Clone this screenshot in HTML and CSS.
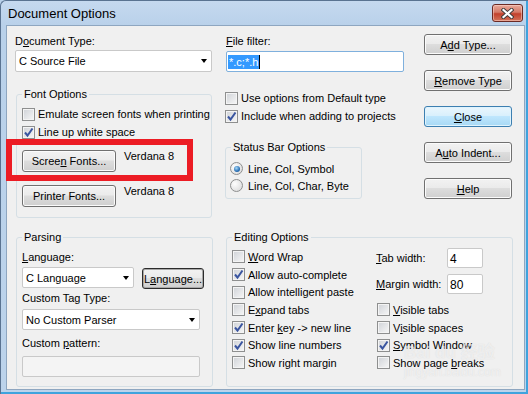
FILE: index.html
```html
<!DOCTYPE html>
<html lang="en">
<head>
    <meta charset="UTF-8">
    <title>Document Options</title>
    <link rel="stylesheet" href="styles.css">
</head>
<body>
    <div class="window">
        <div class="titlebar">
            <span class="title">Document Options</span>
            <button class="close-btn">
                <svg width="13" height="11" viewBox="0 0 13 11">
                    <path d="M2.5 2 L10.5 9 M10.5 2 L2.5 9" stroke="#3a3a3a" stroke-width="4" stroke-linecap="square"/>
                    <path d="M2.5 2 L10.5 9 M10.5 2 L2.5 9" stroke="#fff" stroke-width="2.2" stroke-linecap="square"/>
                </svg>
            </button>
        </div>
        <div class="client">
            <div class="top">
                <div class="col-left">
                    <div class="label">D<u>o</u>cument Type:</div>
                    <div class="select doc-type"><span>C Source File</span><i class="arrow"></i></div>
                    <fieldset class="group font-group">
                        <legend>Font Options</legend>
                        <div class="check first"><span class="box"></span><span>Emulate screen fonts when printing</span></div>
                        <div class="check"><span class="box on"><svg viewBox="0 0 11 11"><path d="M2 5.5 L4.5 8.5 L9.5 1.5"/></svg></span><span>Line up white space</span></div>
                        <div class="font-row first">
                            <button class="btn font-btn">Scree<u>n</u> Fonts...</button>
                            <span class="font-name">Verdana 8</span>
                        </div>
                        <div class="font-row">
                            <button class="btn font-btn">Printer Fonts...</button>
                            <span class="font-name">Verdana 8</span>
                        </div>
                    </fieldset>
                </div>
                <div class="col-mid">
                    <div class="label"><u>F</u>ile filter:</div>
                    <div class="textbox filter"><span class="sel">*.c;*.h</span><span class="caret"></span></div>
                    <div class="check first"><span class="box"></span><span>Use options from Default type</span></div>
                    <div class="check"><span class="box on"><svg viewBox="0 0 11 11"><path d="M2 5.5 L4.5 8.5 L9.5 1.5"/></svg></span><span>Include when adding to projects</span></div>
                    <fieldset class="group status-group">
                        <legend>Status Bar Options</legend>
                        <div class="radio-row first"><span class="radio on"></span><span>Line, Col, Symbol</span></div>
                        <div class="radio-row"><span class="radio"></span><span>Line, Col, Char, Byte</span></div>
                    </fieldset>
                </div>
                <div class="col-right">
                    <button class="btn">A<u>d</u>d Type...</button>
                    <button class="btn"><u>R</u>emove Type</button>
                    <button class="btn default"><u>C</u>lose</button>
                    <button class="btn">A<u>u</u>to Indent...</button>
                    <button class="btn"><u>H</u>elp</button>
                </div>
            </div>
            <div class="bottom">
                <fieldset class="group parse-group">
                    <legend>Parsing</legend>
                    <div class="label first"><u>L</u>anguage:</div>
                    <div class="lang-row">
                        <div class="select lang"><span>C Language</span><i class="arrow"></i></div>
                        <button class="btn focus lang-btn">L<u>a</u>nguage...</button>
                    </div>
                    <div class="label tag-label">Custom Tag Type:</div>
                    <div class="select parser"><span>No Custom Parser</span><i class="arrow"></i></div>
                    <div class="label pattern-label">Custom <u>p</u>attern:</div>
                    <div class="textbox disabled"></div>
                </fieldset>
                <fieldset class="group edit-group">
                    <legend>Editing Options</legend>
                    <div class="edit-cols">
                        <div class="edit-left">
                            <div class="check row"><span class="box"></span><span><u>W</u>ord Wrap</span></div>
                            <div class="check row"><span class="box on"><svg viewBox="0 0 11 11"><path d="M2 5.5 L4.5 8.5 L9.5 1.5"/></svg></span><span>Allow auto-complete</span></div>
                            <div class="check row"><span class="box"></span><span>Allow intelligent paste</span></div>
                            <div class="check row"><span class="box"></span><span>E<u>x</u>pand tabs</span></div>
                            <div class="check row"><span class="box on"><svg viewBox="0 0 11 11"><path d="M2 5.5 L4.5 8.5 L9.5 1.5"/></svg></span><span>Enter <u>k</u>ey -&gt; new line</span></div>
                            <div class="check row"><span class="box on"><svg viewBox="0 0 11 11"><path d="M2 5.5 L4.5 8.5 L9.5 1.5"/></svg></span><span>Show line numbers</span></div>
                            <div class="check row"><span class="box"></span><span>Show right margin</span></div>
                        </div>
                        <div class="edit-right">
                            <div class="num-row"><span class="num-label"><u>T</u>ab width:</span><span class="textbox num">4</span></div>
                            <div class="num-row"><span class="num-label"><u>M</u>argin width:</span><span class="textbox num">80</span></div>
                            <div class="check row first-vis"><span class="box"></span><span><u>V</u>isible tabs</span></div>
                            <div class="check row"><span class="box"></span><span>V<u>i</u>sible spaces</span></div>
                            <div class="check row"><span class="box on"><svg viewBox="0 0 11 11"><path d="M2 5.5 L4.5 8.5 L9.5 1.5"/></svg></span><span><u>S</u>ymbol Window</span></div>
                            <div class="check row"><span class="box"></span><span>Show page <u>b</u>reaks</span></div>
                        </div>
                    </div>
                </fieldset>
            </div>
            <div class="highlight"></div>
            <div class="watermark">
                <span class="wm-logo">Bai du 经验</span>
                <span class="wm-url">jingyan.baidu.com</span>
            </div>
        </div>
    </div>
</body>
</html>
```

FILE: styles.css
```css
* {
    box-sizing: border-box;
}
body {
    margin: 0;
    font-family: "Liberation Sans", Arial, sans-serif;
    font-size: 11px;
    color: #000;
    background: #b9d1ea;
    overflow: hidden;
}
u {
    text-decoration-thickness: 1px;
    text-underline-offset: 1px;
}
.window {
    width: 528px;
    height: 394px;
    display: flex;
    flex-direction: column;
    background: linear-gradient(#c5d9ef, #b9d1ea 24px, #bcd3eb);
    border-left: 1px solid #5a7391;
    border-top: 1px solid #5a7391;
    border-radius: 6px 0 0 0;
    box-shadow: inset -2px -2px 0 #3fa3dd;
}
.titlebar {
    height: 24px;
    display: flex;
    justify-content: space-between;
    align-items: flex-start;
    padding: 0 5px 0 7px;
}
.title {
    font-size: 13px;
    line-height: 15px;
    margin-top: 5px;
}
.close-btn {
    width: 31px;
    height: 18px;
    margin-top: 3px;
    padding: 0;
    display: flex;
    align-items: center;
    justify-content: center;
    border: 1px solid #6b2a24;
    border-radius: 3px;
    background: linear-gradient(#e9a99b, #d47a68 45%, #c2402c 55%, #d3735a);
    box-shadow: inset 0 0 0 1px rgba(255, 220, 210, 0.5);
}
.client {
    flex: 1;
    margin: 0 3px 4px 5px;
    background: #f0f0f0;
    border: 1px solid #8ea6c0;
    position: relative;
}

/* top area */
.top {
    display: flex;
    padding-left: 8px;
}
.col-left {
    width: 197px;
}
.col-mid {
    width: 178px;
    margin-left: 14px;
}
.col-right {
    width: 88px;
    margin-left: 20px;
    padding-top: 8px;
    display: flex;
    flex-direction: column;
    gap: 15px;
}
.label {
    height: 14px;
    line-height: 14px;
    white-space: nowrap;
}
.col-left > .label, .col-mid > .label {
    margin-top: 8px;
}

/* combo boxes */
.select {
    height: 21px;
    background: #fff;
    border: 1px solid #c9c9c9;
    border-radius: 2px;
    display: flex;
    align-items: center;
    padding: 0 4px 0 3px;
}
.select .arrow {
    margin-left: auto;
    width: 0;
    height: 0;
    border-top: 4px solid #000;
    border-left: 3.5px solid transparent;
    border-right: 3.5px solid transparent;
}
.doc-type {
    height: 22px;
    margin-top: 2px;
}

/* text boxes */
.textbox {
    height: 21px;
    background: #fff;
    border: 1px solid #c9c9c9;
    border-radius: 2px;
    display: flex;
    align-items: center;
}
.filter {
    margin-top: 3px;
    border-color: #7fb0dd;
    padding-left: 1px;
}
.filter .sel {
    background: #3399ff;
    color: #fff;
    line-height: 14px;
    padding: 0 1px;
}
.filter .caret {
    width: 1px;
    height: 14px;
    background: #000;
}
.textbox.disabled {
    margin-top: 6px;
    width: 178px;
    background: #f4f4f4;
}

/* group boxes */
.group {
    margin: 0;
    padding: 0 0 0 5px;
    border: 1px solid #d5dfe5;
    border-radius: 3px;
    min-width: 0;
}
.group legend {
    padding: 0 2px;
    height: 14px;
    line-height: 14px;
}
.font-group {
    margin-top: 15px;
    margin-left: 1px;
    width: 196px;
    height: 131px;
}
.status-group {
    margin-top: 15px;
    margin-left: -1px;
    width: 137px;
    height: 59px;
    padding-left: 4px;
}
.status-group legend {
    margin-left: 1px;
}

/* check boxes and radios */
.check, .radio-row {
    display: flex;
    align-items: center;
    height: 18px;
    white-space: nowrap;
}
.check.first {
    margin-top: 4px;
}
.col-mid .check.first {
    margin-top: 17px;
}
.box {
    width: 13px;
    height: 13px;
    margin-right: 3px;
    border: 1px solid #8e8f8f;
    background: linear-gradient(135deg, #cfd2d7, #f7f7f7);
    box-shadow: inset 0 0 0 1px #f4f4f4;
    flex-shrink: 0;
}
.col-mid .box {
    margin-left: -1px;
}
.box svg {
    display: block;
    width: 11px;
    height: 11px;
}
.box svg path {
    fill: none;
    stroke: #3a55a0;
    stroke-width: 2;
}
.radio-row {
    height: 17px;
}
.radio-row.first {
    margin-top: 6px;
}
.radio {
    width: 13px;
    height: 13px;
    margin-right: 5px;
    border-radius: 50%;
    border: 1px solid #8e8f8f;
    background: radial-gradient(circle at 35% 35%, #fefefe, #d6d6d6);
    display: flex;
    align-items: center;
    justify-content: center;
}
.radio.on::after {
    content: "";
    width: 6px;
    height: 6px;
    border-radius: 50%;
    background: radial-gradient(circle at 40% 35%, #a8dcfb, #2a6fb4 60%, #134b86);
}

/* buttons */
.btn {
    font: inherit;
    color: #000;
    height: 21px;
    padding: 0;
    border: 1px solid #707070;
    border-radius: 3px;
    background: linear-gradient(#f2f2f2, #ebebeb 45%, #dddddd 50%, #cfcfcf);
    box-shadow: inset 0 0 0 1px #fbfbfb;
    white-space: nowrap;
}
.btn.default {
    border-color: #3c7fb1;
    background: linear-gradient(#eaf6fd, #d9f0fc 45%, #bee6fd 50%, #a7d9f5);
    box-shadow: inset 0 0 0 1px #dff3fd;
}
.btn.focus {
    border-color: #2c2c2c;
    box-shadow: inset 0 0 0 1px #a8a8a8;
}
.font-row {
    display: flex;
    align-items: flex-start;
    gap: 8px;
}
.font-row.first {
    margin-top: 9px;
}
.font-row + .font-row {
    margin-top: 13px;
}
.font-btn {
    width: 94px;
    height: 22px;
}
.font-name {
    line-height: 14px;
    margin-top: -1px;
}

/* bottom area */
.bottom {
    display: flex;
    gap: 13px;
    padding-left: 9px;
    margin-top: 12px;
}
.parse-group {
    width: 197px;
    height: 157px;
}
.parse-group .label.first {
    margin-top: 6px;
}
.lang-row {
    display: flex;
    align-items: flex-start;
    gap: 8px;
    margin-top: 3px;
}
.select.lang {
    width: 112px;
}
.lang-btn {
    width: 62px;
    margin-top: 1px;
}
.tag-label {
    margin-top: 2px;
}
.select.parser {
    width: 178px;
    margin-top: 4px;
}
.pattern-label {
    margin-top: 6px;
}
.edit-group {
    width: 287px;
    height: 157px;
}
.edit-cols {
    display: flex;
}
.edit-left {
    width: 144px;
    padding-top: 4px;
}
.check.row {
    height: 17.7px;
}
.edit-right {
    padding-top: 4px;
}
.num-row {
    display: flex;
    align-items: center;
    height: 20px;
}
.num-row + .num-row {
    margin-top: 6px;
}
.num-label {
    width: 71px;
}
.textbox.num {
    width: 36px;
    height: 20px;
    padding: 2px 0 0 2px;
    font-size: 12px;
}
.first-vis {
    margin-top: 7px;
}
.edit-right .box {
    margin-left: 1px;
}

/* red annotation box over the font buttons */
.highlight {
    position: absolute;
    left: -1px;
    top: 113px;
    width: 187px;
    height: 42px;
    border: 6px solid #ec1c24;
}
.watermark {
    position: absolute;
    left: 397px;
    top: 317px;
    display: flex;
    flex-direction: column;
    align-items: flex-start;
    color: rgba(255, 255, 255, 0.55);
    text-shadow: 0 0 1px rgba(160, 160, 160, 0.3);
    pointer-events: none;
}
.wm-logo {
    font-family: "Liberation Sans", "Noto Sans CJK SC", sans-serif;
    font-weight: bold;
    font-size: 17px;
    line-height: 20px;
}
.wm-url {
    font-size: 12px;
    line-height: 13px;
    margin-top: 3px;
}
```
